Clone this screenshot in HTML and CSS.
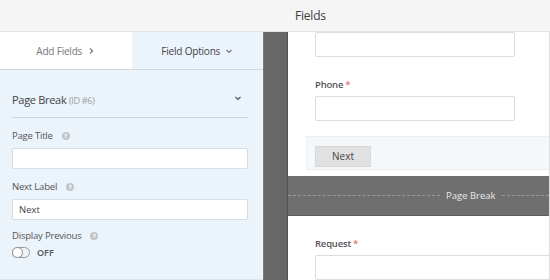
FILE: index.html
```html
<!DOCTYPE html>
<html lang="en">
<head>
  <meta charset="UTF-8" />
  <title>Fields</title>
  <link rel="stylesheet" href="styles.css">
</head>
<body>
  <div class="header">Fields</div>

  <div class="main">
    <div class="sidebar">
      <div class="tabs">
        <div class="tab">Add Fields
          <svg class="chev" viewBox="0 0 8 8"><path d="M3 1.5 L5.5 4 L3 6.5" /></svg>
        </div>
        <div class="tab active">Field Options
          <svg class="chev" viewBox="0 0 8 8"><path d="M1.5 3 L4 5.5 L6.5 3" /></svg>
        </div>
      </div>

      <div class="options">
        <div class="section-head">
          <span class="section-title">Page Break <small>(ID #6)</small></span>
          <svg class="chev dark" viewBox="0 0 8 8"><path d="M1.5 3 L4 5.5 L6.5 3" /></svg>
        </div>

        <div class="opt-row">
          <label class="opt-label">Page Title <span class="help">?</span></label>
          <input class="opt-input" type="text" value="">
        </div>

        <div class="opt-row">
          <label class="opt-label">Next Label <span class="help">?</span></label>
          <input class="opt-input" type="text" value="Next">
        </div>

        <div class="opt-row last">
          <label class="opt-label">Display Previous <span class="help">?</span></label>
          <div class="toggle-row">
            <span class="toggle"><span class="knob"></span></span>
            <span class="toggle-text">OFF</span>
          </div>
        </div>
      </div>
    </div>

    <div class="strip"></div>

    <div class="canvas">
      <div class="field first">
        <div class="fake-input short"></div>
      </div>

      <div class="field">
        <div class="field-label">Phone<span class="req">*</span></div>
        <div class="fake-input short"></div>
      </div>

      <div class="next-row">
        <button class="next-btn">Next</button>
      </div>

      <div class="page-break">
        <span class="dash"></span>
        <span class="pb-text">Page Break</span>
        <span class="dash"></span>
      </div>

      <div class="field request">
        <div class="field-label">Request<span class="req">*</span></div>
        <div class="fake-input wide"></div>
      </div>
    </div>
  </div>
</body>
</html>
```

FILE: styles.css
```css
body {
  margin: 0;
  width: 550px;
  height: 280px;
  overflow: hidden;
  font-family: 'Open Sans', sans-serif;
  color: #444;
  background: #ffffff;
}

.header {
  height: 31px;
  line-height: 31px;
  background: #f5f5f5;
  border-bottom: 1px solid #e2e2e2;
  padding-left: 295px;
  font-size: 12px;
  letter-spacing: -0.2px;
  color: #3c3c3c;
}

.main {
  display: flex;
  height: 248px;
}

/* left panel */
.sidebar {
  width: 263px;
  background: #ebf3fb;
  border-bottom: 1px solid #dde6ee;
  box-sizing: border-box;
}

.tabs {
  display: flex;
  height: 37px;
  border-bottom: 1px solid #cfd9e3;
}

.tab {
  flex: 1;
  display: flex;
  align-items: center;
  justify-content: center;
  gap: 5px;
  font-size: 10px;
  letter-spacing: -0.2px;
  color: #777;
  background: #ffffff;
}

.tab.active {
  background: #ebf3fb;
  color: #444;
}

.chev {
  width: 8px;
  height: 8px;
  fill: none;
  stroke: #777;
  stroke-width: 1.2;
}

.chev.dark {
  stroke: #555;
}

.options {
  padding: 0 15px 0 12px;
}

.section-head {
  display: flex;
  align-items: flex-end;
  justify-content: space-between;
  height: 48px;
  box-sizing: border-box;
  padding: 0 6px 10px 0;
  border-bottom: 1px solid #c9d4de;
}

.section-head .chev {
  margin-bottom: 5px;
}

.section-title {
  font-size: 11px;
  letter-spacing: -0.3px;
  color: #444;
}

.section-title small {
  font-size: 9px;
  color: #a0a0a0;
}

.opt-row {
  margin-top: 10px;
}

.opt-row.last {
  margin-top: 8px;
}

.opt-label {
  display: flex;
  align-items: center;
  gap: 9px;
  font-size: 9.5px;
  letter-spacing: -0.2px;
  color: #555;
  height: 15px;
}

.help {
  display: inline-flex;
  align-items: center;
  justify-content: center;
  width: 8px;
  height: 8px;
  border-radius: 50%;
  background: #c2c6ca;
  color: #fff;
  font-size: 6px;
  font-weight: bold;
  letter-spacing: 0;
}

.opt-input {
  display: block;
  box-sizing: border-box;
  width: 100%;
  height: 21px;
  margin-top: 5px;
  padding: 0 6px;
  border: 1px solid #d6dde3;
  border-radius: 2px;
  background: #fff;
  font-family: inherit;
  font-size: 9.5px;
  color: #444;
}

.toggle-row {
  display: flex;
  align-items: center;
  gap: 7px;
  margin-top: 3px;
}

.toggle {
  display: inline-block;
  position: relative;
  width: 16px;
  height: 9px;
  border: 1px solid #9a9a9a;
  border-radius: 6px;
}

.knob {
  position: absolute;
  left: 0;
  top: 0;
  width: 9px;
  height: 9px;
  border-radius: 50%;
  box-shadow: 0 0 0 1px #9a9a9a;
  background: #fff;
}

.toggle-text {
  font-size: 9px;
  font-weight: 600;
  color: #555;
}

/* dark gutter */
.strip {
  width: 23px;
  background: #676767;
  border-left: 1px solid #7a7a7a;
}

/* preview */
.canvas {
  flex: 1;
  background: #ffffff;
  border-left: 1px solid #555;
  border-right: 1px solid #ddd;
  overflow: hidden;
}

.field {
  padding-left: 27px;
}

.field-label {
  font-size: 9.5px;
  font-weight: 600;
  letter-spacing: -0.2px;
  color: #555;
  height: 14px;
  margin-bottom: 4px;
}

.req {
  color: #e27272;
  margin-left: 2px;
}

.fake-input {
  box-sizing: border-box;
  height: 25px;
  border: 1px solid #dcdcdc;
  border-radius: 2px;
  background: #fff;
}

.fake-input.short {
  width: 200px;
}

.fake-input.wide {
  width: 300px;
}

.field + .field {
  margin-top: 21px;
}

.next-row {
  margin: 15px 0 0 18px;
  height: 34px;
  box-sizing: border-box;
  padding: 6px 0 0 8px;
  background: #f5f8fb;
  border: 1px solid #ebeff3;
  border-right: none;
}

.next-btn {
  width: 56px;
  height: 21px;
  border: 1px solid #d8d8d8;
  background: #e1e1e1;
  font-family: inherit;
  font-size: 10px;
  color: #444;
  padding: 0;
}

.page-break {
  display: flex;
  align-items: center;
  gap: 6px;
  margin-top: 6px;
  height: 39px;
  background: #6f6f6f;
  border-bottom: 1px solid #5f5f5f;
}

.dash {
  flex: 1;
  border-top: 1px dashed #9a9a9a;
}

.dash:first-child {
  flex: 0 0 152px;
}

.pb-text {
  font-size: 9.5px;
  color: #e8e8e8;
}

.field.request {
  margin-top: 21px;
}
```
